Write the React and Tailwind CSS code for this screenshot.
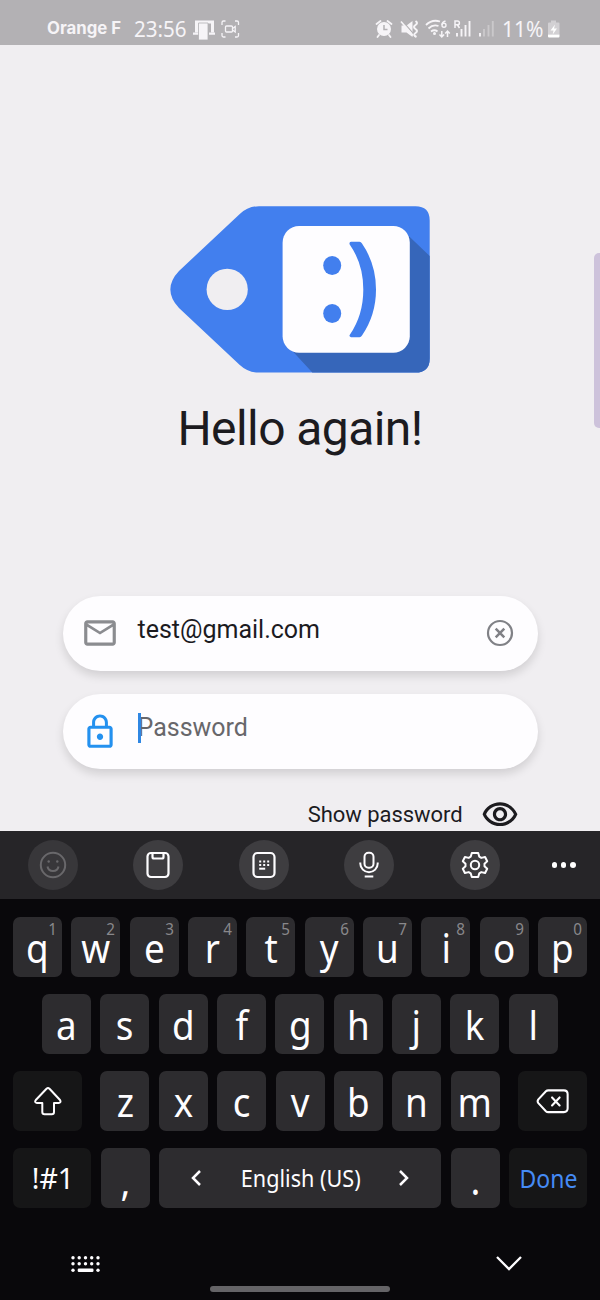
import React from "react";

const noto = "font-['Noto_Sans',sans-serif]";

function StatusBar() {
  return (
    <header className="flex h-[45px] shrink-0 items-start bg-[#b3b1b4] pl-[47px] text-[#f6f4f7]">
      <span className="mt-[17px] w-[87px] whitespace-nowrap font-[Inter,sans-serif] text-[16.8px] leading-[22px] font-bold">Orange F</span>
      <span className={`${noto} mt-[16px] w-[59px] origin-left scale-x-[0.98] whitespace-nowrap text-[21px] leading-[26px]`}>23:56</span>
      <svg className="h-[45px] w-[25px]" viewBox="193 0 25 45" fill="currentColor">
        <path d="M195 20.5h19v12h-3v-9h-12v9h-4z" />
        <path d="M193 32.5h6v2.3h-6zM209 32.5h6v2.3h-6z" />
        <path d="M198.500 23h9.5v17h-9.5z" stroke="#b3b1b4" strokeWidth="0.8" />
      </svg>
      <svg className="ml-[2px] h-[45px] w-[22px]" viewBox="220 0 22 45" fill="none" stroke="currentColor" strokeWidth="1.3">
        <path d="M222 25v-2.500q0-1.500 1.500-1.500h2M235 21h2q1.500 0 1.500 1.500v2.500M238.500 33v2.500q0 1.500-1.500 1.500h-2M225.500 37h-2q-1.500 0-1.500-1.500v-2.500" />
        <rect x="225.500" y="26" width="7" height="6" rx="1" />
        <path d="M232.500 28.500l2.700-2v5.500l-2.700-2" />
      </svg>
      <svg className="ml-[132px] h-[45px] w-[20px]" viewBox="374 0 20 45">
        <circle cx="384" cy="29" r="7" fill="currentColor" />
        <path d="M376.500 24l4-3M391.500 24l-4-3M379 35l-1.500 2M389 35l1.500 2" stroke="currentColor" strokeWidth="1.800" strokeLinecap="round" />
        <path d="M384 25v4.500h3.500" fill="none" stroke="#b3b1b4" strokeWidth="1.500" />
      </svg>
      <svg className="ml-[5px] h-[45px] w-[22px]" viewBox="399 0 22 45" fill="currentColor">
        <path d="M401.500 25.500h5l6-4.500v16l-6-4.500h-5z" />
        <path d="M401.700 20.200l12.500 14.500" stroke="#b3b1b4" strokeWidth="1.300" />
        <path d="M401 21.500l12 14" stroke="currentColor" strokeWidth="1.600" />
        <path d="M415.500 21q3 2 0 4t0 4t0 4t1 4" fill="none" stroke="currentColor" strokeWidth="2" />
      </svg>
      <svg className="ml-[3px] h-[45px] w-[28px]" viewBox="424 0 28 45" fill="none" stroke="currentColor" strokeWidth="1.800">
        <path d="M426 25q6-6 14-3.500M428.500 28.500q4.500-4.500 10-2.500M431 31.500q3.500-2.500 6.500 0" />
        <circle cx="434.500" cy="33.500" r="1.500" fill="currentColor" stroke="none" />
        <path d="M445.500 21q-3.500 1-3.500 4M441.800 31v6M439.500 34.500l2.300 2.500 2.300-2.500M447.500 37v-6M445.200 33.500l2.300-2.500 2.300 2.500" strokeWidth="1.500" />
        <circle cx="444" cy="25.300" r="2" strokeWidth="1.400" />
      </svg>
      <svg className="ml-[1px] h-[45px] w-[20px]" viewBox="453 0 20 45" fill="none" stroke="currentColor">
        <path d="M455 28v-7h2.500a1.900 1.900 0 0 1 0 3.800H455M457.500 25l2 3" strokeWidth="1.500" />
        <path d="M457 33v3.500M461.500 29v7.500M465.500 25v11.500M469.500 21v15.500" strokeWidth="1.900" />
      </svg>
      <svg className="ml-[4px] h-[45px] w-[20px]" viewBox="477 0 20 45" fill="none" stroke="currentColor" strokeWidth="1.900">
        <path d="M480 33v3.500" />
        <path d="M484 29v7.500M488.500 25v11.500M492.800 21v15.500" opacity=".35" />
      </svg>
      <span className={`${noto} mt-[16px] ml-[5px] w-[44px] whitespace-nowrap text-[21px] leading-[26px]`}>11%</span>
      <svg className="h-[45px] w-[16px]" viewBox="546 0 16 45">
        <path d="M551 20.500h5v2h2.500q1 0 1 1v11h-11.500v-11q0-1 1-1h2z" fill="#d2d0d3" />
        <path d="M548 34.500h11.500v2q0 1-1 1H549q-1 0-1-1z" fill="#fff" />
        <path d="M555 24.500l-4.500 6h3l-.8 4 4.300-6h-3z" fill="#fff" />
      </svg>
    </header>
  );
}

function Logo() {
  return (
    <svg className="h-[169px] w-[262px] shrink-0" viewBox="169 205 262 169">
      <path d="M259 206.200H415.500Q429.700 206.200 429.700 220.500V358.500Q429.700 372.600 415.500 372.600H259Q248 372.600 239.500 364.700L179 308Q161.700 289.300 179 271L239.500 214.200Q248 206.200 259 206.200Z" fill="#427fee" />
      <path d="M409 236.200L429.700 256V358.500Q429.700 372.600 415.500 372.600H312.300L292 350.500L300 330H390V236.200Z" fill="#3666ba" />
      <circle cx="227.200" cy="289.400" r="20.600" fill="#f0eef1" />
      <rect x="282.600" y="226" width="127.200" height="126.800" rx="16.500" fill="#fefdff" />
      <ellipse cx="332.200" cy="265.500" rx="9" ry="9.500" fill="#427fee" />
      <ellipse cx="332.200" cy="313.500" rx="9" ry="9.500" fill="#427fee" />
      <path d="M351 241.800H359.500Q361 241.800 362 243.500Q376 264 376 289.500T362 335.500Q361 337.200 359.500 337.200H351Q348.500 336.500 350 334.500Q363.300 315 363.300 289.500T350 245Q348.500 242.500 351 241.800Z" fill="#427fee" />
    </svg>
  );
}

function LoginPanel() {
  const field = "flex h-[75px] w-[475px] shrink-0 items-center rounded-full bg-[#fefdff] pl-[18px] shadow-[0_5px_10px_rgba(0,0,0,0.13)]";
  return (
    <main className="relative flex h-[786px] shrink-0 flex-col items-center overflow-hidden bg-[#f0eef1] pt-[160px] font-[Roboto,sans-serif] text-[#1c1b1f]">
      <Logo />
      <h1 className="mt-[27px] h-[56px] text-[48px] leading-[56px] font-normal tracking-[-0.58px] whitespace-nowrap">Hello again!</h1>
      <section className="mt-[139px] flex w-[475px] flex-col gap-[23px]">
        <div className={field}>
          <svg className="mb-[2px] size-[38px] shrink-0" viewBox="0 0 24 24" fill="#8b8c90">
            <path d="M22 6c0-1.100-.9-2-2-2H4c-1.100 0-2 .9-2 2v12c0 1.100.9 2 2 2h16c1.100 0 2-.9 2-2V6zm-2 0l-8 5-8-5h16zm0 12H4V8l8 5 8-5v10z" />
          </svg>
          <span className="mb-[8px] ml-[19px] w-[348px] text-[25px] leading-[30px] whitespace-nowrap">test@gmail.com</span>
          <svg className="mb-[2px] size-[28px] shrink-0" viewBox="0 0 28 28" fill="none" stroke="#808186" strokeWidth="2.200">
            <circle cx="14" cy="14" r="12" />
            <path d="M9.700 9.700l8.600 8.600M18.300 9.700l-8.600 8.600" strokeWidth="2.500" />
          </svg>
        </div>
        <div className={field}>
          <svg className="size-[38px] shrink-0" viewBox="0 0 24 24" fill="#2491ef">
            <path d="M12 17c1.100 0 2-.9 2-2s-.9-2-2-2-2 .9-2 2 .9 2 2 2zm6-9h-1V6c0-2.760-2.240-5-5-5S7 3.240 7 6v2H6c-1.100 0-2 .9-2 2v10c0 1.100.9 2 2 2h12c1.100 0 2-.9 2-2V10c0-1.100-.9-2-2-2zM8.900 6c0-1.710 1.390-3.100 3.100-3.100s3.100 1.390 3.100 3.100v2H8.900V6zM18 20H6V10h12v10z" />
          </svg>
          <span className="relative mb-[8px] ml-[19px] text-[25px] leading-[30px] whitespace-nowrap text-[#68676b]">
            Password
            <i className="absolute top-0 left-0 h-[30px] w-[3px] bg-[#2f87e3]" />
          </span>
        </div>
      </section>
      <div className="mt-[27px] flex w-[475px] shrink-0 items-center justify-end pr-[19px]">
        <span className="text-[22px] leading-[38px] tracking-[-0.06px] whitespace-nowrap">Show password</span>
        <svg className="ml-[18px] size-[38px]" viewBox="0 0 24 24" fill="#1c1b1f">
          <path d="M12 6c3.790 0 7.170 2.130 8.820 5.500C19.170 14.870 15.790 17 12 17s-7.170-2.130-8.820-5.500C4.830 8.130 8.210 6 12 6m0-2C7 4 2.730 7.110 1 11.500 2.730 15.890 7 19 12 19s9.270-3.110 11-7.500C21.270 7.110 17 4 12 4zm0 5c1.380 0 2.500 1.120 2.500 2.500S13.380 14 12 14s-2.500-1.120-2.500-2.500S10.620 9 12 9m0-2c-2.480 0-4.500 2.020-4.500 4.500S9.520 16 12 16s4.500-2.020 4.500-4.500S14.480 7 12 7z" />
        </svg>
      </div>
      <div className="absolute top-[208px] right-0 h-[175px] w-[6px] rounded-l-[5px] bg-[#cdc2db]" />
    </main>
  );
}

const toolIcons = [
  <g key="smile" stroke="#69686b" strokeWidth="2">
    <circle cx="14" cy="14" r="12.200" />
    <path d="M8.500 15.500a5.600 5.600 0 0 0 11 0" />
    <circle cx="9.700" cy="10.500" r="1.200" fill="#69686b" stroke="none" />
    <circle cx="18.300" cy="10.500" r="1.200" fill="#69686b" stroke="none" />
  </g>,
  <g key="clip" strokeWidth="2.200">
    <rect x="3.500" y="2" width="21" height="24" rx="3.500" />
    <path d="M8.500 2v4q0 1.500 1.500 1.500h8q1.500 0 1.500-1.500V2" />
  </g>,
  <g key="pad" strokeWidth="2.200">
    <rect x="3.500" y="2" width="21" height="24" rx="4" />
    <path d="M9.200 10.500h10M9.200 14h10" strokeWidth="2" strokeDasharray="2 2" />
    <path d="M9.200 17.700h6" strokeWidth="2" />
  </g>,
  <g key="mic" strokeWidth="2">
    <rect x="9.500" y="1.800" width="9" height="15" rx="4" />
    <path d="M5.300 11.500v1a8.700 8.700 0 0 0 17.400 0v-1M9.700 25.500h8.600" />
  </g>,
  <g key="gear" strokeWidth="2" strokeLinejoin="round">
    <path d="M10.800 2h6.400l1.100 3.700 2 1.200 3.800-.9 2.100 4.300-2.700 2.500v2.400l2.700 2.500-2.100 4.300-3.800-.9-2 1.200L17.200 26h-6.400l-1.100-3.700-2-1.200-3.800.9-2.100-4.300 2.700-2.500v-2.400L1.800 10.300 3.900 6l3.800.9 2-1.200z" />
    <circle cx="14" cy="14" r="4.200" />
  </g>,
];

function Toolbar() {
  return (
    <div className="flex h-[68px] shrink-0 items-center bg-[#262528] pl-[27.500px]">
      <div className="flex gap-[55.6px]">
        {toolIcons.map((icon, i) => (
          <div key={i} className={`flex size-[50px] items-center justify-center rounded-full ${i === 0 ? "bg-[#38373a]" : "bg-[#3e3d40]"}`}>
            <svg className="size-[28px]" viewBox="0 0 28 28" fill="none" stroke="#fefdff">{icon}</svg>
          </div>
        ))}
      </div>
      <div className="ml-[52px] flex gap-[4px]">
        {[0, 1, 2].map((i) => <i key={i} className="size-[5.3px] rounded-full bg-white" />)}
      </div>
    </div>
  );
}

function Key({ children, hint }) {
  return (
    <div className="relative flex h-[60px] w-[49px] shrink-0 justify-center rounded-[7px] bg-[#2d2c2f]">
      <span className="mt-[1px] scale-x-[0.92] text-[40px] leading-[60px]">{children}</span>
      {hint && <span className="absolute top-[3px] right-[5px] scale-x-[0.95] text-[16px] leading-[18px] text-[#89888b]">{hint}</span>}
    </div>
  );
}

function Row({ letters, hints = [] }) {
  return (
    <div className="flex gap-[9.350px]">
      {letters.split("").map((l, i) => <Key key={l} hint={hints[i]}>{l}</Key>)}
    </div>
  );
}

function Keyboard() {
  const special = "flex h-[60px] shrink-0 items-center justify-center rounded-[7px] bg-[#161617]";
  return (
    <div className={`${noto} flex h-[401px] shrink-0 flex-col bg-[#09080b] pt-[18px] text-[#fefdff]`}>
      <div className="flex flex-col gap-[17px]">
        <div className="flex pl-[13px]"><Row letters="qwertyuiop" hints={"1234567890".split("")} /></div>
        <div className="flex pl-[42px]"><Row letters="asdfghjkl" /></div>
        <div className="flex justify-between px-[13px]">
          <div className={`${special} w-[69px]`}>
            <svg className="size-[30px]" viewBox="0 0 30 30" fill="none" stroke="currentColor" strokeWidth="2" strokeLinejoin="round">
              <path d="M13.500 2.700q1.500-1.300 3 0L27 14q1.500 2.500-1.200 3H21v9q0 2.300-2.200 2.300h-7.200Q9.300 28.300 9.300 26v-9H4q-3-.5-1.200-3z" />
            </svg>
          </div>
          <Row letters="zxcvbnm" />
          <div className={`${special} w-[69px]`}>
            <svg className="h-[26.500px] w-[34px]" viewBox="0 0 36 28" fill="none" stroke="currentColor" strokeWidth="2.200" strokeLinejoin="round" strokeLinecap="round">
              <path d="M13 2.500h16.500q4 0 4 4v15q0 4-4 4H13q-1.500 0-2.500-1L2.500 16q-1.500-2 0-4l8-8.500q1-1 2.500-1z" />
              <path d="M17 10l8 8.500M25 10l-8 8.500" />
            </svg>
          </div>
        </div>
        <div className="flex gap-[9.500px] pl-[13px]">
          <div className={`${special} w-[78px]`}><span className="pl-[2px] text-[28.500px] leading-[60px]">!#1</span></div>
          <Key><span className="relative top-[2px]">,</span></Key>
          <div className="flex h-[60px] w-[282px] items-center justify-between rounded-[7px] bg-[#2d2c2f] px-[31px]">
            <svg className="h-[18px] w-[12px]" viewBox="0 0 12 18" fill="none" stroke="currentColor" strokeWidth="2.500"><path d="M10 2L3 9l7 7" /></svg>
            <span className="scale-x-[0.94] pl-[1px] text-[23px] leading-[60px] whitespace-nowrap">English (US)</span>
            <svg className="h-[18px] w-[12px]" viewBox="0 0 12 18" fill="none" stroke="currentColor" strokeWidth="2.500"><path d="M2 2l7 7-7 7" /></svg>
          </div>
          <Key><span className="relative top-[1px]">.</span></Key>
          <div className={`${special} w-[78px] text-[#458bf5]`}><span className="scale-x-[0.92] text-[25px] leading-[60px]">Done</span></div>
        </div>
      </div>
      <div className="mt-[41px] flex h-[30px] items-center justify-between pr-[77px] pl-[71px]">
        <svg className="h-[18px] w-[30px]" viewBox="0 0 30 18" fill="currentColor">
          {[2, 8.2, 14.500, 20.700, 27].map((x) => [2.700, 8.800].map((y) => <circle key={`${x}-${y}`} cx={x} cy={y} r="1.700" />))}
          <circle cx="2" cy="15.300" r="1.700" />
          <circle cx="27" cy="15.300" r="1.700" />
          <rect x="6.700" y="13.600" width="15.800" height="3.400" rx="1.200" />
        </svg>
        <svg className="mb-[2px] h-[16px] w-[28px]" viewBox="0 0 28 16" fill="none" stroke="currentColor" strokeWidth="2.300"><path d="M2 2l12 12L26 2" /></svg>
      </div>
      <div className="mt-[7px] h-[6px] w-[180px] self-center rounded-full bg-[#656467]" />
    </div>
  );
}

export default function App() {
  return (
    <div className="flex h-[1300px] w-[600px] flex-col overflow-hidden">
      <StatusBar />
      <LoginPanel />
      <Toolbar />
      <Keyboard />
    </div>
  );
}
